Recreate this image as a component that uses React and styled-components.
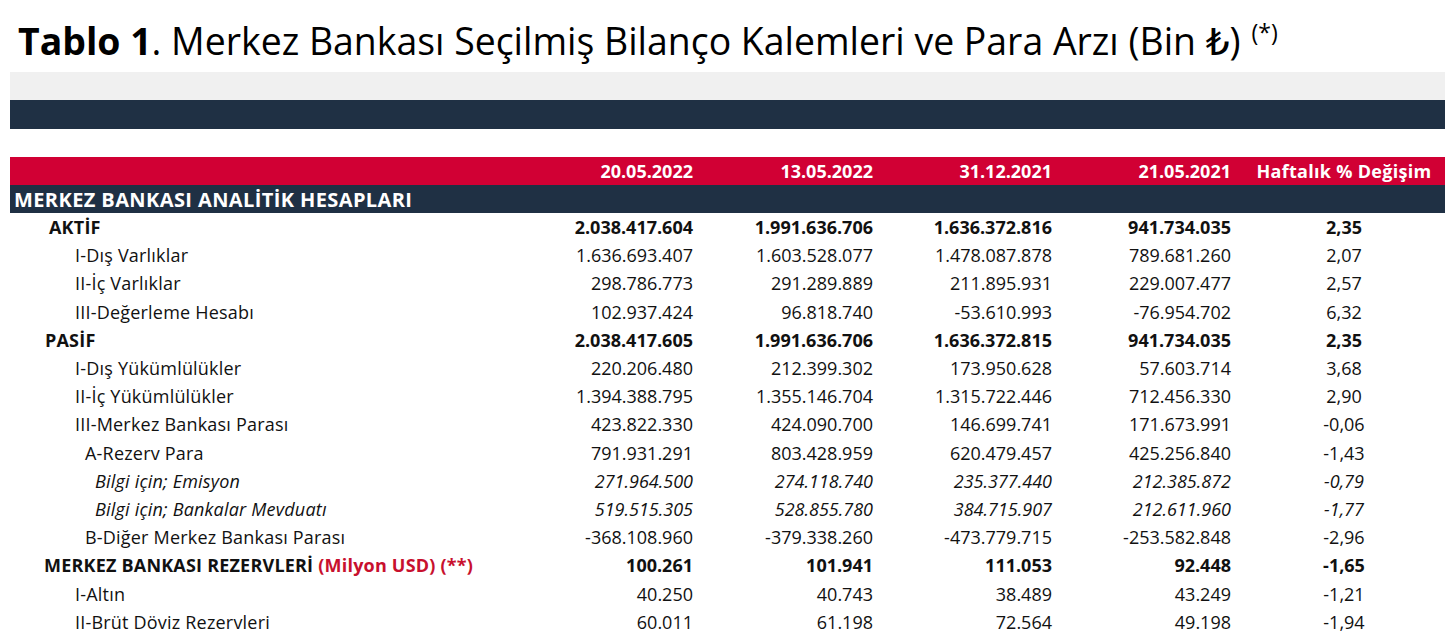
import React from "react";
import styled, { createGlobalStyle } from "styled-components";

const GlobalStyle = createGlobalStyle`
  body {
    margin: 0;
    background: #ffffff;
    font-family: "Open Sans", "DejaVu Sans", sans-serif;
    color: #111111;
  }
`;

const GRID = "503px 180px 180px 179px 179px 1fr";

const HEADERS = ["20.05.2022", "13.05.2022", "31.12.2021", "21.05.2021"];

const ROWS = [
  { label: "AKTİF", indent: 39, bold: true, values: ["2.038.417.604", "1.991.636.706", "1.636.372.816", "941.734.035", "2,35"] },
  { label: "I-Dış Varlıklar", indent: 65, values: ["1.636.693.407", "1.603.528.077", "1.478.087.878", "789.681.260", "2,07"] },
  { label: "II-İç Varlıklar", indent: 65, values: ["298.786.773", "291.289.889", "211.895.931", "229.007.477", "2,57"] },
  { label: "III-Değerleme Hesabı", indent: 65, values: ["102.937.424", "96.818.740", "-53.610.993", "-76.954.702", "6,32"] },
  { label: "PASİF", indent: 35, bold: true, values: ["2.038.417.605", "1.991.636.706", "1.636.372.815", "941.734.035", "2,35"] },
  { label: "I-Dış Yükümlülükler", indent: 65, values: ["220.206.480", "212.399.302", "173.950.628", "57.603.714", "3,68"] },
  { label: "II-İç Yükümlülükler", indent: 65, values: ["1.394.388.795", "1.355.146.704", "1.315.722.446", "712.456.330", "2,90"] },
  { label: "III-Merkez Bankası Parası", indent: 65, values: ["423.822.330", "424.090.700", "146.699.741", "171.673.991", "-0,06"] },
  { label: "A-Rezerv Para", indent: 75, values: ["791.931.291", "803.428.959", "620.479.457", "425.256.840", "-1,43"] },
  { label: "Bilgi için; Emisyon", indent: 85, italic: true, values: ["271.964.500", "274.118.740", "235.377.440", "212.385.872", "-0,79"] },
  { label: "Bilgi için; Bankalar Mevduatı", indent: 85, italic: true, values: ["519.515.305", "528.855.780", "384.715.907", "212.611.960", "-1,77"] },
  { label: "B-Diğer Merkez Bankası Parası", indent: 75, values: ["-368.108.960", "-379.338.260", "-473.779.715", "-253.582.848", "-2,96"] },
  { label: "MERKEZ BANKASI REZERVLERİ", note: "(Milyon USD) (**)", indent: 34, bold: true, values: ["100.261", "101.941", "111.053", "92.448", "-1,65"] },
  { label: "I-Altın", indent: 65, values: ["40.250", "40.743", "38.489", "43.249", "-1,21"] },
  { label: "II-Brüt Döviz Rezervleri", indent: 65, values: ["60.011", "61.198", "72.564", "49.198", "-1,94"] },
];

const Page = styled.div`
  width: 1445px;
`;

const Title = styled.h1`
  margin: 0;
  height: 72px;
  box-sizing: border-box;
  padding: 17px 0 0 18px;
  font-size: 37.4px;
  line-height: 47px;
  font-weight: 400;
  color: #000000;
  white-space: nowrap;

  b {
    font-weight: 700;
  }
`;

const Sup = styled.sup`
  font-size: 23px;
  margin-left: 11px;
  vertical-align: 14px;
  line-height: 0;
`;

const Table = styled.div`
  margin-left: 10px;
`;

const Band = styled.div`
  height: ${(p) => p.$h}px;
  background: ${(p) => p.$bg};
`;

const Gap = styled.div`
  height: 28px;
`;

const Row = styled.div`
  display: grid;
  grid-template-columns: ${GRID};
  align-items: center;
  height: ${(p) => p.$h || 28.2}px;
  background: ${(p) => p.$bg || "transparent"};
  color: ${(p) => p.$color || "#111111"};
  font-size: 18px;
  font-weight: ${(p) => (p.$bold ? 700 : 400)};
  font-style: ${(p) => (p.$italic ? "italic" : "normal")};
  white-space: nowrap;
`;

const Label = styled.div`
  padding-left: ${(p) => p.$indent}px;
  letter-spacing: 0.2px;
`;

const SectionLabel = styled.div`
  grid-column: 1 / -1;
  padding-left: 4px;
  font-size: 20px;
  font-weight: 700;
  letter-spacing: 0.4px;
  color: #ffffff;
`;

const Note = styled.span`
  color: #c8102e;
  margin-left: 5px;
`;

const Num = styled.div`
  text-align: right;
`;

const HeadText = styled.div`
  text-align: center;
  padding-left: 12px;
  letter-spacing: 0.3px;
`;

const Change = styled.div`
  text-align: center;
  padding-left: 12px;
`;

export default function App() {
  return (
    <Page>
      <GlobalStyle />
      <Title>
        <b>Tablo 1</b>. Merkez Bankası Seçilmiş Bilanço Kalemleri ve Para Arzı (Bin ₺)
        <Sup>(*)</Sup>
      </Title>
      <Table>
        <Band $h={28} $bg="#f0f0f0" />
        <Band $h={29} $bg="#1f3044" />
        <Gap />
        <Row $h={28} $bg="#d10034" $color="#ffffff" $bold>
          <Label $indent={0} />
          {HEADERS.map((h) => (
            <Num key={h}>{h}</Num>
          ))}
          <HeadText>Haftalık % Değişim</HeadText>
        </Row>
        <Row $h={28} $bg="#1f3044">
          <SectionLabel>MERKEZ BANKASI ANALİTİK HESAPLARI</SectionLabel>
        </Row>
        {ROWS.map((r) => (
          <Row key={r.label + r.indent} $bold={r.bold} $italic={r.italic}>
            <Label $indent={r.indent}>
              {r.label}
              {r.note && <Note>{r.note}</Note>}
            </Label>
            {r.values.slice(0, 4).map((v, i) => (
              <Num key={i}>{v}</Num>
            ))}
            <Change>{r.values[4]}</Change>
          </Row>
        ))}
      </Table>
    </Page>
  );
}
